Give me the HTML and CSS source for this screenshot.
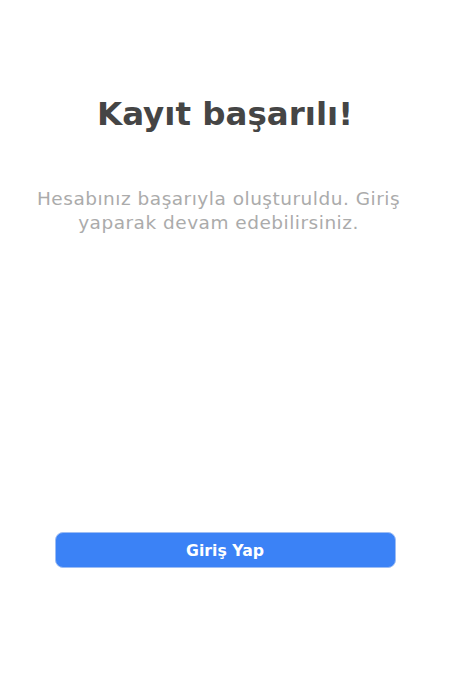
FILE: index.html
```html
<!DOCTYPE html>
<html lang="tr">
<head>
<meta charset="utf-8">
<title>Kayıt başarılı</title>
<link rel="stylesheet" href="styles.css">
</head>
<body>
<main class="screen">
  <section class="message">
    <h1 class="title">Kayıt başarılı!</h1>
    <p class="subtitle">Hesabınız başarıyla oluşturuldu. Giriş yaparak devam edebilirsiniz.</p>
  </section>
  <div class="actions">
    <button class="btn-primary" type="button">Giriş Yap</button>
  </div>
</main>
</body>
</html>
```
FILE: styles.css
```css
* { box-sizing: border-box; }
html, body {
  margin: 0;
  padding: 0;
  background: #ffffff;
}
body {
  font-family: "DejaVu Sans", "Open Sans", sans-serif;
}
.screen {
  width: 450px;
  height: 675px;
  display: flex;
  flex-direction: column;
  align-items: center;
  padding: 94px 30px 0;
}
.message {
  display: flex;
  flex-direction: column;
  align-items: center;
  text-align: center;
}
.title {
  margin: 0;
  font-size: 32.5px;
  line-height: 40px;
  font-weight: 700;
  color: #454545;
}
.subtitle {
  margin: 53px 0 0;
  padding-right: 13px;
  font-size: 18.5px;
  line-height: 24px;
  letter-spacing: 0.5px;
  color: #ababab;
  font-weight: 400;
}
.actions {
  margin-top: auto;
  margin-bottom: 107px;
  width: 341px;
}
.btn-primary {
  display: flex;
  align-items: center;
  justify-content: center;
  width: 100%;
  height: 36px;
  border: 1px solid #9dbdf4;
  border-radius: 8px;
  background: #3b82f6;
  color: #ffffff;
  font-family: inherit;
  font-size: 15.7px;
  font-weight: 700;
  cursor: pointer;
}
```
